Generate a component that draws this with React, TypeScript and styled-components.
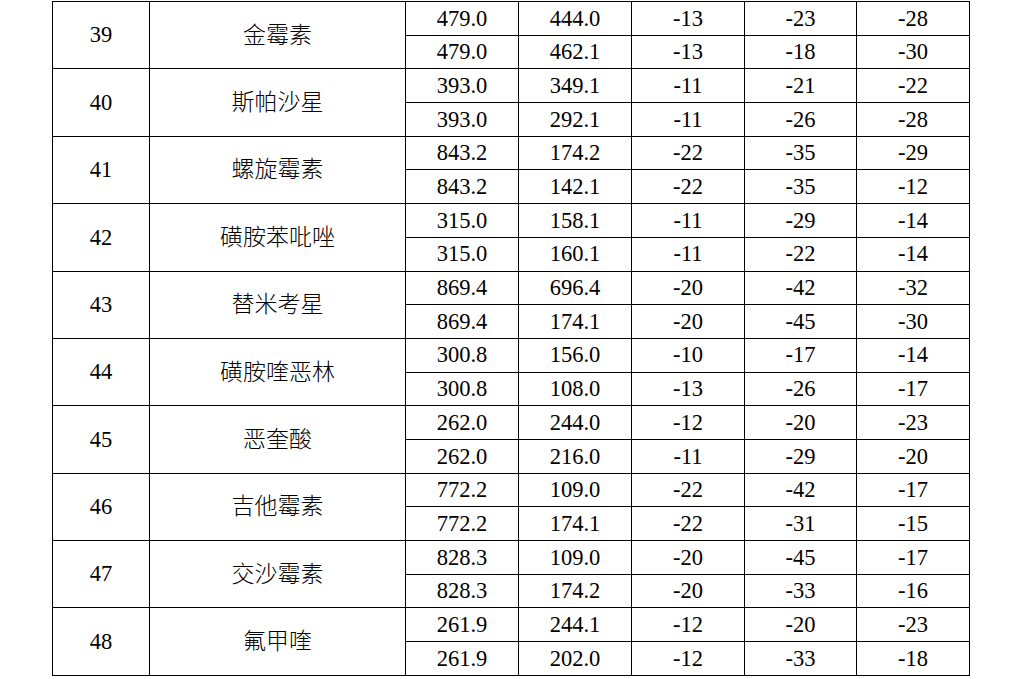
import React from 'react';
import styled, { createGlobalStyle } from 'styled-components';

interface IRow {
    no : number;
    name : string;
    lines : string[][];
};

const rows : IRow[] = [
    { no: 39, name: '金霉素', lines: [['479.0', '444.0', '-13', '-23', '-28'], ['479.0', '462.1', '-13', '-18', '-30']] },
    { no: 40, name: '斯帕沙星', lines: [['393.0', '349.1', '-11', '-21', '-22'], ['393.0', '292.1', '-11', '-26', '-28']] },
    { no: 41, name: '螺旋霉素', lines: [['843.2', '174.2', '-22', '-35', '-29'], ['843.2', '142.1', '-22', '-35', '-12']] },
    { no: 42, name: '磺胺苯吡唑', lines: [['315.0', '158.1', '-11', '-29', '-14'], ['315.0', '160.1', '-11', '-22', '-14']] },
    { no: 43, name: '替米考星', lines: [['869.4', '696.4', '-20', '-42', '-32'], ['869.4', '174.1', '-20', '-45', '-30']] },
    { no: 44, name: '磺胺喹恶林', lines: [['300.8', '156.0', '-10', '-17', '-14'], ['300.8', '108.0', '-13', '-26', '-17']] },
    { no: 45, name: '恶奎酸', lines: [['262.0', '244.0', '-12', '-20', '-23'], ['262.0', '216.0', '-11', '-29', '-20']] },
    { no: 46, name: '吉他霉素', lines: [['772.2', '109.0', '-22', '-42', '-17'], ['772.2', '174.1', '-22', '-31', '-15']] },
    { no: 47, name: '交沙霉素', lines: [['828.3', '109.0', '-20', '-45', '-17'], ['828.3', '174.2', '-20', '-33', '-16']] },
    { no: 48, name: '氟甲喹', lines: [['261.9', '244.1', '-12', '-20', '-23'], ['261.9', '202.0', '-12', '-33', '-18']] },
];

const GlobalStyle = createGlobalStyle`
    html, body {
        margin: 0;
        padding: 0;
        background: #FFFFFF;
    }
`;

const Page = styled.div`
    padding: 1px 0 0 52px;
`;

const Table = styled.table`
    border-collapse: collapse;
    table-layout: fixed;
    width: 918px;
    font-family: "Liberation Serif", "Noto Sans CJK SC", serif;
    font-size: 22.5px;
    color: #000000;
`;

const Row = styled.tr`
    height: 33.7px;
`;

const Cell = styled.td`
    border: 1px solid #000000;
    padding: 1px 0 0;
    text-align: center;
    vertical-align: middle;
    line-height: 1;
`;

const NameCell = styled(Cell)`
    font-family: "Noto Sans CJK SC", serif;
    font-weight: 300;
    font-size: 23px;
    padding: 0 0 4px;
`;

const widths = [97, 256, 113, 113, 113, 112, 113];

const App = () => (
    <Page>
        <GlobalStyle />
        <Table>
            <colgroup>
                { widths.map((w, i) => <col key={ i } style={{ width: w }} />) }
            </colgroup>
            <tbody>
                { rows.map(r => r.lines.map((line, li) => (
                    <Row key={ `${ r.no }-${ li }` }>
                        { li === 0 && <Cell rowSpan={ 2 }>{ r.no }</Cell> }
                        { li === 0 && <NameCell rowSpan={ 2 }>{ r.name }</NameCell> }
                        { line.map((v, vi) => <Cell key={ vi }>{ v }</Cell>) }
                    </Row>
                ))) }
            </tbody>
        </Table>
    </Page>
);

export default App;
